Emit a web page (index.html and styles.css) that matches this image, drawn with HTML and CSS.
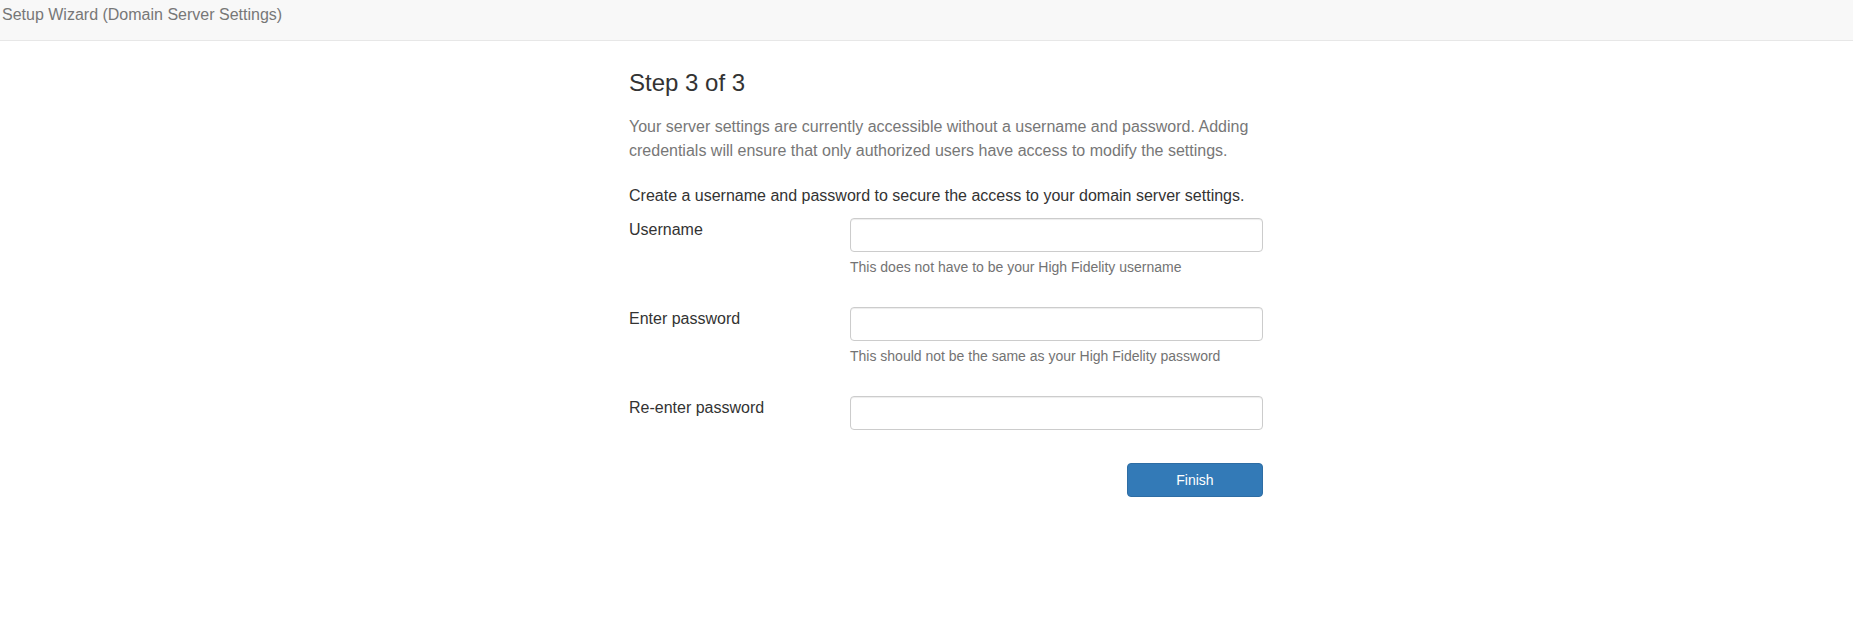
FILE: index.html
```html
<!DOCTYPE html>
<html lang="en">
<head>
<meta charset="utf-8">
<title>Setup Wizard</title>
<link rel="stylesheet" href="styles.css">
</head>
<body>
<header class="navbar">
  <span class="brand">Setup Wizard (Domain Server Settings)</span>
</header>
<main class="page">
  <section class="wizard">
    <h3 class="step-title">Step 3 of 3</h3>
    <p class="intro">Your server settings are currently accessible without a username and password. Adding credentials will ensure that only authorized users have access to modify the settings.</p>
    <p class="instruction">Create a username and password to secure the access to your domain server settings.</p>
    <form class="form">
      <div class="form-group">
        <label class="form-label" for="user">Username</label>
        <div class="form-field">
          <input class="form-input" id="user" type="text">
          <span class="help">This does not have to be your High Fidelity username</span>
        </div>
      </div>
      <div class="form-group">
        <label class="form-label" for="pass">Enter password</label>
        <div class="form-field">
          <input class="form-input" id="pass" type="password">
          <span class="help">This should not be the same as your High Fidelity password</span>
        </div>
      </div>
      <div class="form-group">
        <label class="form-label" for="pass2">Re-enter password</label>
        <div class="form-field">
          <input class="form-input" id="pass2" type="password">
        </div>
      </div>
      <div class="actions">
        <button class="btn-primary" type="button">Finish</button>
      </div>
    </form>
  </section>
</main>
</body>
</html>
```

FILE: styles.css
```css
* { box-sizing: border-box; }

html, body {
  margin: 0;
  padding: 0;
  background: #fff;
  font-family: "Liberation Sans", Arial, sans-serif;
  color: #333;
}

.navbar {
  height: 41px;
  background: #f8f8f8;
  border-bottom: 1px solid #e7e7e7;
  padding: 5px 0 0 2px;
}

.brand {
  display: block;
  font-size: 16px;
  line-height: 20px;
  color: #777;
}

.page {
  padding-top: 29px;
}

.wizard {
  width: 634px;
  margin-left: 629px;
}

.step-title {
  margin: 0 0 19px;
  font-size: 24px;
  line-height: 26.4px;
  font-weight: 500;
  color: #333;
}

.intro {
  margin: 0 0 21px;
  font-size: 16px;
  line-height: 24px;
  color: #777;
}

.instruction {
  margin: 0 0 10px;
  font-size: 16px;
  line-height: 24px;
  color: #333;
}

.form {
  display: flex;
  flex-direction: column;
  gap: 30px;
  margin: 0;
}

.form-group {
  display: grid;
  grid-template-columns: 221px 413px;
}

.form-label {
  font-size: 16px;
  line-height: 23px;
  color: #333;
}

.form-field {
  display: flex;
  flex-direction: column;
}

.form-input {
  display: block;
  width: 100%;
  height: 34px;
  padding: 6px 12px;
  font-family: inherit;
  font-size: 16px;
  color: #555;
  background: #fff;
  border: 1px solid #ccc;
  border-radius: 4px;
  box-shadow: inset 0 1px 1px rgba(0, 0, 0, 0.075);
  outline: none;
}

.help {
  display: block;
  margin-top: 5px;
  font-size: 14px;
  line-height: 20px;
  color: #737373;
}

.actions {
  display: flex;
  justify-content: flex-end;
  margin-top: 3px;
}

.btn-primary {
  width: 136px;
  height: 34px;
  padding: 6px 12px;
  font-family: inherit;
  font-size: 14px;
  line-height: 20px;
  color: #fff;
  background: #337ab7;
  border: 1px solid #2e6da4;
  border-radius: 4px;
  cursor: pointer;
}
```
